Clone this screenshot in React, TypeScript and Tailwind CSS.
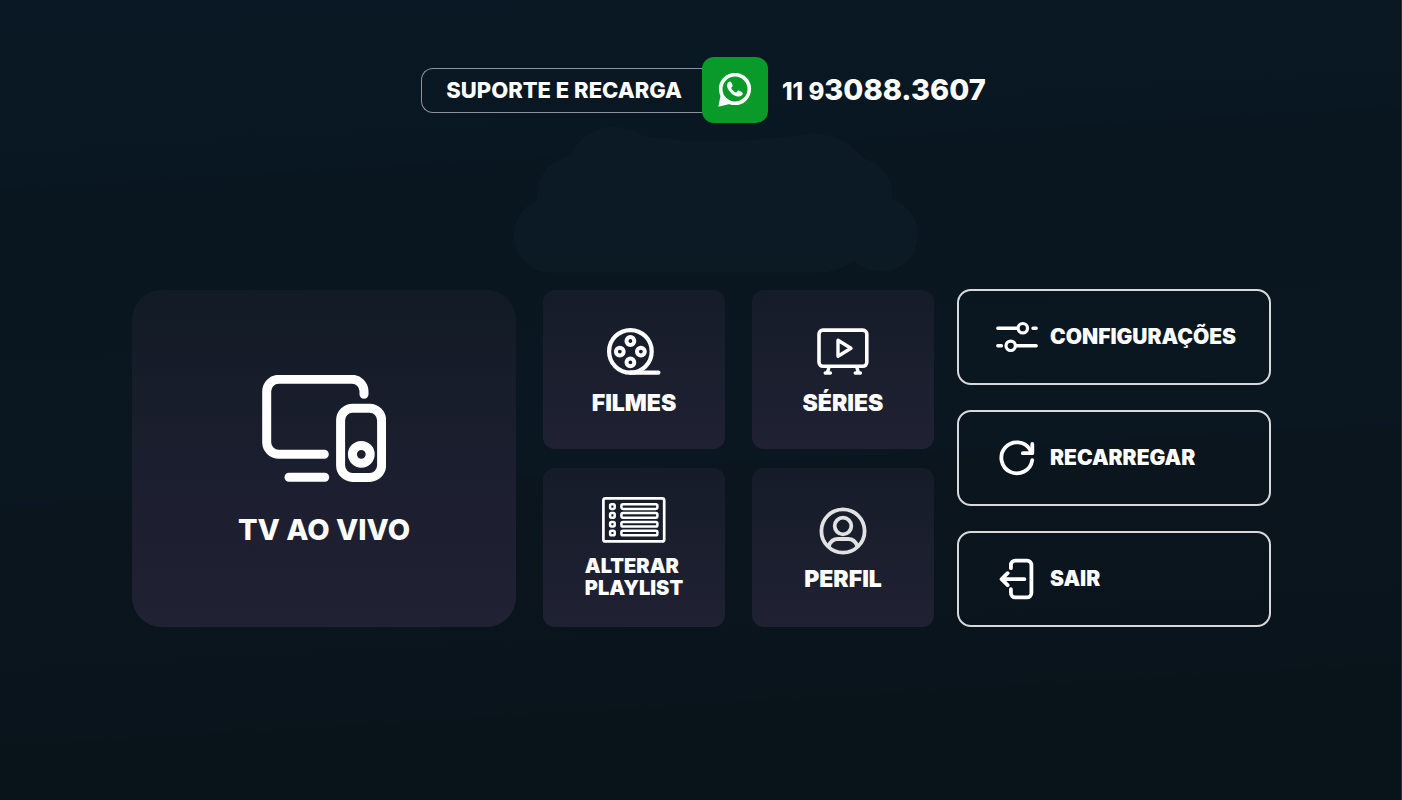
import type { ReactNode } from "react";

function WhatsAppIcon() {
  return (
    <svg width="34" height="34" viewBox="0 0 34 34" role="img" aria-label="WhatsApp">
      <circle cx="17" cy="16" r="14.3" fill="none" stroke="currentColor" strokeWidth="3.6" />
      <path d="M0.3 33.8L2.6 22.6L6.4 23.4L9.6 27L11.6 31Z" fill="currentColor" />
      <path d="M12 8.6c-1 0-3 1.3-3 3.8 0 3.4 5 11 11.8 11.2 2.3 0 4-1.7 4-3.4 0-.8-3.7-2.7-4.5-2.7-.7 0-1.5 2-2.2 2-1.2 0-4.8-3.2-4.9-4.5 0-.7 1.4-1.4 1.4-2.3 0-.6-1.3-4.1-2.6-4.1z" fill="currentColor" />
    </svg>
  );
}

function DevicesIcon() {
  return (
    <svg width="124" height="107" viewBox="0 0 124 107" fill="none" stroke="currentColor" strokeWidth="9" strokeLinecap="round" aria-hidden="true">
      <path d="M102 19.3v-3a12 12 0 0 0-12-12H16.7a12 12 0 0 0-12 12v51a12 12 0 0 0 12 12H62.3" />
      <path d="M27 102.3H62.7" />
      <rect x="78.6" y="33.2" width="41" height="69.2" rx="12" />
      <circle cx="99.3" cy="79.3" r="8.9" />
    </svg>
  );
}

function ReelIcon() {
  return (
    <svg width="54" height="47" viewBox="0 0 54 47" fill="none" stroke="currentColor" strokeWidth="4.2" strokeLinecap="round" aria-hidden="true">
      <circle cx="23.4" cy="23.4" r="21.3" />
      <path d="M23.4 44.7H51.4" />
      <g strokeWidth="4">
        <circle cx="23.4" cy="13" r="3.9" />
        <circle cx="12.8" cy="23.6" r="3.9" />
        <circle cx="33.9" cy="23.6" r="3.9" />
        <circle cx="23.4" cy="34.3" r="3.9" />
      </g>
    </svg>
  );
}

function SeriesIcon() {
  return (
    <svg width="52" height="47" viewBox="0 0 52 47" fill="none" stroke="currentColor" strokeWidth="3.6" strokeLinecap="round" strokeLinejoin="round" aria-hidden="true">
      <rect x="2" y="2.1" width="47.8" height="36.2" rx="4" />
      <path d="M21 12.3V28.3L34 20.3Z" strokeWidth="3.4" />
      <path d="M11.8 40L10.4 44.6M8.2 45H13.4M40 40L41.4 44.6M38.2 45H43.4" strokeWidth="3.4" />
    </svg>
  );
}

function PlaylistIcon() {
  return (
    <svg width="64" height="46" viewBox="0 0 64 46" fill="none" stroke="currentColor" strokeWidth="2.5" aria-hidden="true">
      <rect x="1.4" y="1.4" width="60.8" height="43" rx="2" strokeWidth="2.7" />
      {[9.6, 18.4, 27.2, 36].map((y) => (
        <g key={y}>
          <rect x="8.1" y={y - 2.3} width="4.6" height="4.6" rx="1.4" />
          <rect x="19.4" y={y - 2.3} width="36" height="4.6" rx="1.6" />
        </g>
      ))}
    </svg>
  );
}

function ProfileIcon() {
  return (
    <svg width="48" height="48" viewBox="0 0 48 48" className="text-[#e2e2e2]" fill="none" stroke="currentColor" strokeWidth="3.8" aria-hidden="true">
      <circle cx="24" cy="24" r="21.6" />
      <circle cx="24" cy="19" r="8.3" />
      <path d="M9.6 39.2C11.4 34.6 14.6 32 18.8 32H29.2C33.4 32 36.6 34.6 38.4 39.2" />
    </svg>
  );
}

function SlidersIcon() {
  return (
    <svg width="42" height="42" viewBox="0 0 42 42" fill="none" stroke="currentColor" strokeWidth="3.4" strokeLinecap="round" aria-hidden="true">
      <path d="M1.8 12.2H21M37 12.2H40.2M1.8 29.8H5.4M20.4 29.8H40.2" />
      <circle cx="26.8" cy="12.2" r="4.7" strokeWidth="3.2" />
      <circle cx="14.7" cy="29.8" r="4.7" strokeWidth="3.2" />
    </svg>
  );
}

function ReloadIcon() {
  return (
    <svg width="42" height="42" viewBox="0 0 42 42" fill="none" stroke="currentColor" strokeWidth="3.8" strokeLinecap="round" strokeLinejoin="round" aria-hidden="true">
      <path d="M36.2 23.2A15.5 15.5 0 1 1 34 12.6L35.6 15.4" />
      <path d="M36.3 7V16.2H26.8" />
    </svg>
  );
}

function ExitIcon() {
  return (
    <svg width="42" height="42" viewBox="0 0 42 42" fill="none" stroke="currentColor" strokeWidth="3.8" strokeLinecap="round" strokeLinejoin="round" aria-hidden="true">
      <path d="M14.9 10.2V7A4.4 4.4 0 0 1 19.3 2.6H31A4.4 4.4 0 0 1 35.4 7V35A4.4 4.4 0 0 1 31 39.4H19.3A4.4 4.4 0 0 1 14.9 35V31.2" />
      <path d="M28.4 21.2H5.6M11.6 15.2L5.6 21.2L11.6 27.2" />
    </svg>
  );
}

function Cloud() {
  return (
    <svg width="408" height="147" viewBox="0 0 408 147" className="mt-1 ml-[30px]" fill="url(#cloud-fill)" aria-hidden="true">
      <defs>
        <linearGradient id="cloud-fill" x1="0" y1="0" x2="0" y2="1">
          <stop offset="0" stopColor="#0c1a25" />
          <stop offset="1" stopColor="#0b1a23" />
        </linearGradient>
      </defs>
      <path d="M36 145.6A37.5 37.5 0 0 1 26.5 73A37.5 37.5 0 0 1 58 29A49 49 0 0 1 131 9Q165 15 203 14.7T290 8A60 60 0 0 1 350.7 31.3A37 37 0 0 1 379.7 72.3A37 37 0 0 1 369.7 144.7A44 44 0 0 1 342 133.7Q325 145.6 305 145.6Z" />
    </svg>
  );
}

function Tile({ icon, label, spacing = "gap-4" }: { icon: ReactNode; label: string; spacing?: string }) {
  return (
    <button type="button" className={`flex h-[159px] flex-col items-center justify-center rounded-xl bg-linear-to-b from-[#151c28] to-[#202133] pt-[3px] text-[23px] leading-6 font-black ${spacing}`}>
      {icon}
      <span>{label}</span>
    </button>
  );
}

function Action({ icon, label }: { icon: ReactNode; label: string }) {
  return (
    <button type="button" className="flex h-24 items-center gap-3 rounded-[14px] border-2 border-[#d9d9dc] pl-[37px] text-[21px] font-black">
      {icon}
      <span>{label}</span>
    </button>
  );
}

export default function App() {
  return (
    <div className="flex min-h-screen flex-col items-center border-r border-[#26343c] bg-[linear-gradient(176.6deg,#091824_0%,#091722_21%,#091620_22%,#0a1620_57%,#0a151e_58%,#0a141c_84%,#09131a_85%)] pt-[57px] font-['Inter','Liberation_Sans',sans-serif] text-white">
      <header className="ml-[6px] flex items-center">
        <div className="flex h-[45px] items-center rounded-l-xl border border-r-0 border-[#8d9298] pr-5 pl-6 text-[22px] font-extrabold">
          SUPORTE E RECARGA
        </div>
        <a href="https://wa.me/5511930883607" className="flex items-center gap-[14px]">
          <span className="flex size-[66px] items-center justify-center rounded-xl bg-[#0a9a2a]">
            <WhatsAppIcon />
          </span>
          <span className="text-[29px] font-extrabold">
            <span className="text-2xl">11 9</span>3088.3607
          </span>
        </a>
      </header>
      <Cloud />
      <main className="mt-[15px] grid w-full grid-cols-[802fr_314fr] items-end gap-[23px] pr-[130px] pl-[132px]">
        <div className="grid grid-cols-[384fr_182fr_182fr] gap-x-[27px] gap-y-[19px]">
          <button type="button" className="row-span-2 flex flex-col items-center justify-center gap-8 rounded-[30px] bg-linear-to-b from-[#111b25] via-[#1b1e2e] to-[#202133] pt-1 text-[29px] leading-8 font-extrabold">
            <DevicesIcon />
            <span>TV AO VIVO</span>
          </button>
          <Tile icon={<ReelIcon />} label="FILMES" />
          <Tile icon={<SeriesIcon />} label="SÉRIES" />
          <button type="button" className="flex h-[159px] flex-col items-center justify-center gap-3 rounded-xl bg-linear-to-b from-[#151c28] to-[#202133] text-xl leading-[22px] font-black">
            <PlaylistIcon />
            <span className="text-left">
              ALTERAR
              <br />
              PLAYLIST
            </span>
          </button>
          <Tile icon={<ProfileIcon />} label="PERFIL" spacing="gap-3" />
        </div>
        <nav className="grid gap-[25px]">
          <Action icon={<SlidersIcon />} label="CONFIGURAÇÕES" />
          <Action icon={<ReloadIcon />} label="RECARREGAR" />
          <Action icon={<ExitIcon />} label="SAIR" />
        </nav>
      </main>
    </div>
  );
}
